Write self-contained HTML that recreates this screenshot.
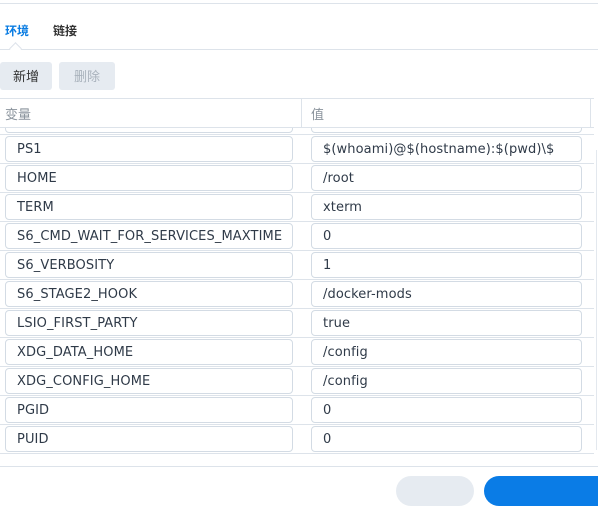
<!DOCTYPE html>
<html><head><meta charset="utf-8"><style>
*{margin:0;padding:0;box-sizing:border-box}
body{width:598px;height:484px;overflow:hidden;background:#fff;position:relative;font-family:"DejaVu Sans","Noto Sans CJK SC",sans-serif;font-size:13px;color:#333}
.abs{position:absolute}
.line{position:absolute;height:1px;background:#dde3ea}
.inp{position:absolute;height:26px;border:1px solid #d3dbe4;border-radius:4px;background:#fff;padding-left:11px;line-height:26px;color:#2f3a48;white-space:nowrap;overflow:hidden;letter-spacing:0.1px}
.cjk{font-family:"Noto Sans CJK SC",sans-serif}
</style></head><body>
<div class="line" style="top:3px;left:0;width:598px"></div>
<div class="abs cjk" style="left:5px;top:22px;color:#0a7ce2;font-weight:bold;font-size:12px">环境</div>
<div class="abs cjk" style="left:53px;top:22px;color:#333;font-weight:bold;font-size:12px">链接</div>
<div class="line" style="top:49px;left:0;width:598px"></div>
<div class="abs" style="left:11px;top:44px;width:9px;height:9px;background:#fff;border-left:1px solid #dde3ea;border-top:1px solid #dde3ea;transform:rotate(45deg)"></div>
<div class="abs cjk" style="left:0;top:62px;width:52px;height:28px;background:#e6ebf1;border-radius:3px;text-align:center;line-height:28px;font-size:13px;color:#333">新增</div>
<div class="abs cjk" style="left:59px;top:62px;width:56px;height:28px;background:#e6ebf1;border-radius:3px;text-align:center;line-height:28px;font-size:13px;color:#a9b2bc">删除</div>
<div class="line" style="top:98px;left:0;width:594px"></div>
<div class="abs" style="left:301px;top:98px;width:1px;height:29px;background:#dde3ea"></div>
<div class="abs" style="left:590px;top:98px;width:1px;height:29px;background:#dde3ea"></div>
<div class="abs cjk" style="left:5px;top:104px;color:#8a939c">变量</div>
<div class="abs cjk" style="left:311px;top:104px;color:#8a939c">值</div>
<div class="line" style="top:127px;left:0;width:594px"></div>
<div class="abs" style="left:0;top:128px;width:598px;height:6px;overflow:hidden">
<div class="inp" style="left:5px;top:-21px;width:288px"></div>
<div class="inp" style="left:311px;top:-21px;width:271px"></div>
</div>
<div class="abs" style="left:596px;top:150px;width:1px;height:300px;background:#e3e8ee"></div>
<div id="rows"></div>
<div class="line" style="top:466px;left:0;width:598px"></div>
<div class="abs" style="left:396px;top:476px;width:78px;height:30px;border-radius:15px;background:#e6ebf1"></div>
<div class="abs" style="left:484px;top:476px;width:130px;height:30px;border-radius:15px;background:#0a7ce6"></div>
<script>
var d=[["PS1","$(whoami)@$(hostname):$(pwd)\\$"],["HOME","/root"],["TERM","xterm"],["S6_CMD_WAIT_FOR_SERVICES_MAXTIME","0"],["S6_VERBOSITY","1"],["S6_STAGE2_HOOK","/docker-mods"],["LSIO_FIRST_PARTY","true"],["XDG_DATA_HOME","/config"],["XDG_CONFIG_HOME","/config"],["PGID","0"],["PUID","0"]];
var h="<div class='line' style='top:134px;left:0;width:594px'></div>";
d.forEach(function(r,i){var t=136+i*29;
h+="<div class='inp' style='left:5px;top:"+t+"px;width:288px'>"+r[0]+"</div>";
h+="<div class='inp' style='left:311px;top:"+t+"px;width:271px'>"+r[1]+"</div>";
h+="<div class='line' style='top:"+(t+27)+"px;left:0;width:594px'></div>";});
document.getElementById("rows").innerHTML=h;
</script>
</body></html>
